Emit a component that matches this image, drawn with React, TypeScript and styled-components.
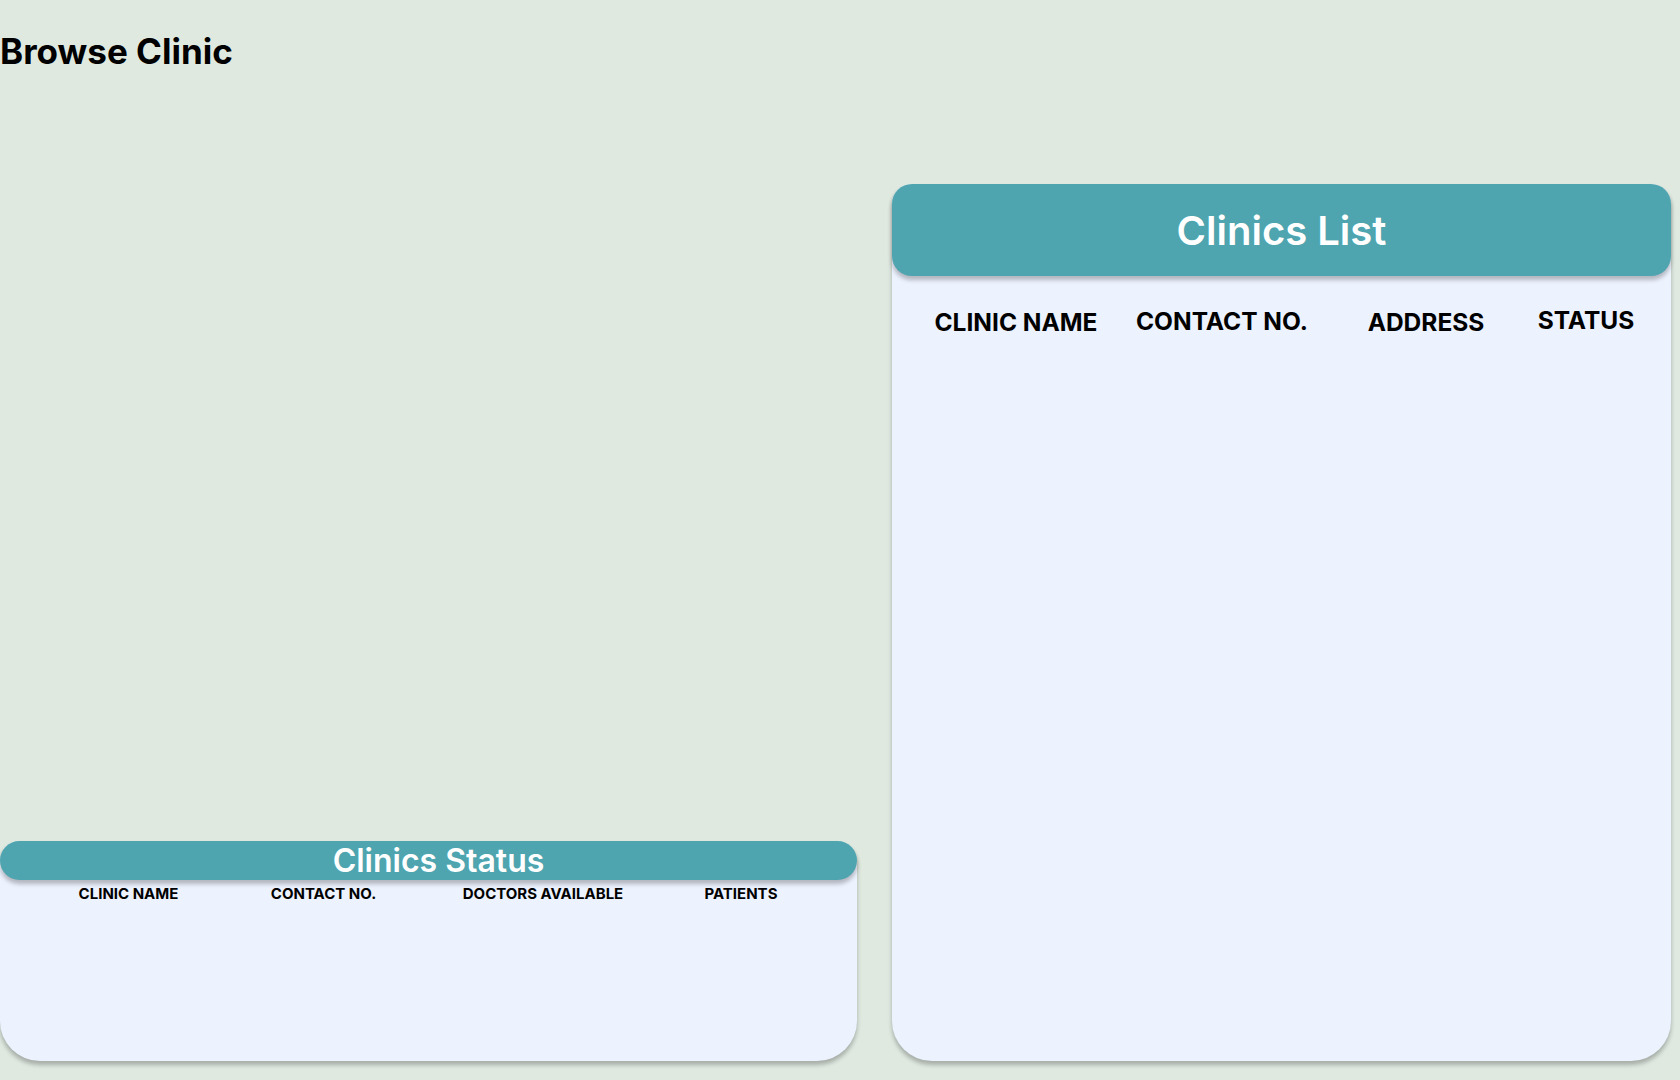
import React from 'react'
import styled, { createGlobalStyle } from 'styled-components'

const GlobalStyle = createGlobalStyle`
  html, body {
    margin: 0;
    padding: 0;
    background: #dfe9e0;
    font-family: Inter, "Noto Sans", "Liberation Sans", sans-serif;
    color: #000;
  }
  * { box-sizing: border-box; }
`

const Page = styled.div`
  width: 1680px;
  height: 1080px;
  overflow: hidden;
`

const PageTitle = styled.h1`
  margin: 29px 0 0;
  height: 44px;
  font-size: 35px;
  font-weight: 700;
  line-height: 44px;
`

const Content = styled.div`
  display: flex;
  gap: 33px;
  margin-top: 111px;
  height: 877px;
  padding-right: 9px;
`

const LeftColumn = styled.div`
  width: 859px;
  display: flex;
  flex-direction: column;
  justify-content: flex-end;
`

const Card = styled.section<{ $height: number; $width: number }>`
  width: ${p => p.$width}px;
  height: ${p => p.$height}px;
  background: #ecf2fe;
  border-radius: 20px 20px 40px 40px;
  box-shadow: 0 4px 4px rgba(0, 0, 0, 0.25);
`

const CardHeader = styled.header<{ $height: number; $size: number; $offset?: number }>`
  display: flex;
  align-items: center;
  justify-content: center;
  height: ${p => p.$height}px;
  padding-left: ${p => p.$offset ?? 0}px;
  background: #4ea5b0;
  border-radius: 20px;
  box-shadow: 0 4px 4px rgba(0, 0, 0, 0.25);
  color: #fff;
  font-size: ${p => p.$size}px;
  font-weight: 600;
  line-height: normal;
`

const ColumnRow = styled.div<{ $cols: string; $top: number; $left: number; $size: number }>`
  display: grid;
  grid-template-columns: ${p => p.$cols};
  margin-top: ${p => p.$top}px;
  padding-left: ${p => p.$left}px;
  font-size: ${p => p.$size}px;
  font-weight: 700;
  line-height: normal;
`

const ColumnLabel = styled.div<{ $nudge?: number }>`
  text-align: center;
  white-space: nowrap;
  transform: translateY(${p => p.$nudge ?? 0}px);
`

export default function App() {
  return (
    <Page>
      <GlobalStyle />
      <PageTitle>Browse Clinic</PageTitle>
      <Content>
        <LeftColumn>
          <Card $width={857} $height={220}>
            <CardHeader $height={39} $size={32} $offset={20}>
              Clinics Status
            </CardHeader>
            <ColumnRow $cols="197px 193px 246px 150px" $top={4} $left={30} $size={15}>
              <ColumnLabel>CLINIC NAME</ColumnLabel>
              <ColumnLabel>CONTACT NO.</ColumnLabel>
              <ColumnLabel>DOCTORS AVAILABLE</ColumnLabel>
              <ColumnLabel>PATIENTS</ColumnLabel>
            </ColumnRow>
          </Card>
        </LeftColumn>
        <Card $width={779} $height={877}>
          <CardHeader $height={92} $size={40}>
            Clinics List
          </CardHeader>
          <ColumnRow $cols="208px 204px 204px 116px" $top={31} $left={20} $size={24.5}>
            <ColumnLabel>CLINIC NAME</ColumnLabel>
            <ColumnLabel $nudge={-1}>CONTACT NO.</ColumnLabel>
            <ColumnLabel>ADDRESS</ColumnLabel>
            <ColumnLabel $nudge={-2}>STATUS</ColumnLabel>
          </ColumnRow>
        </Card>
      </Content>
    </Page>
  )
}
